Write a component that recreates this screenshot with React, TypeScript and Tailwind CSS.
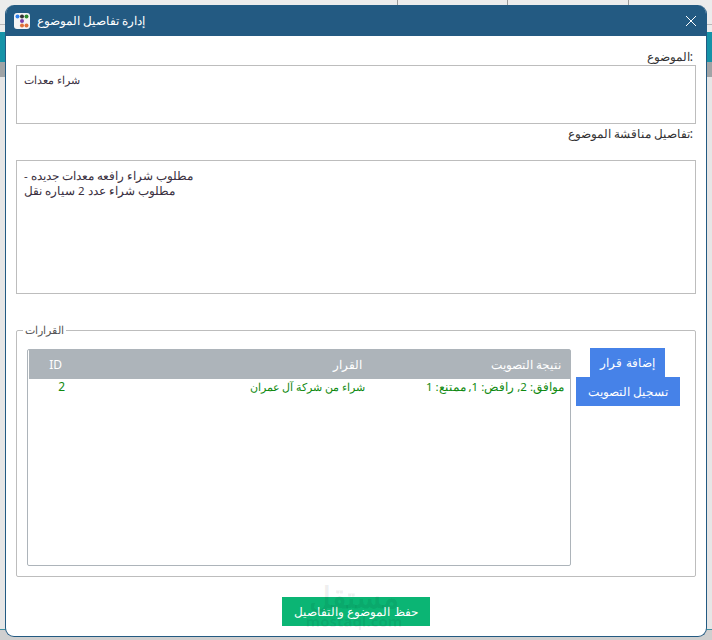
const font = "font-['Noto_Sans','Liberation_Sans',sans-serif]";

function AppIcon() {
  return (
    <svg width="16" height="16" viewBox="0 0 16 16" className="shrink-0">
      <rect width="16" height="16" rx="3" fill="#f4f4f4" />
      <circle cx="3.5" cy="3.5" r="2" fill="#2f80ed" />
      <circle cx="8" cy="3.5" r="2" fill="#333333" />
      <circle cx="12.5" cy="3.5" r="2" fill="#2e8b2e" />
      <circle cx="8" cy="8" r="2" fill="#7b3fa8" />
      <circle cx="8" cy="12.5" r="2" fill="#e0703a" />
      <circle cx="12.5" cy="12.5" r="2" fill="#e0703a" />
    </svg>
  );
}

export default function App() {
  return (
    <div className={`${font} relative w-[712px] h-[640px] overflow-hidden bg-[#ececec] pt-[5px] pl-[5px]`}>
      <div className="absolute left-[397px] top-0 w-px h-[5px] bg-[#9a9a9a]" />
      <div className="absolute left-[507px] top-0 w-px h-[5px] bg-[#9a9a9a]" />
      <div className="absolute left-[628px] top-0 w-px h-[5px] bg-[#9a9a9a]" />
      <div className="absolute left-0 right-0 top-[24px] h-px bg-[#b8b8b8]" />
      <div className="absolute left-0 right-0 top-[32px] h-[30px] bg-[#1593a8]" />
      <div className="absolute left-0 right-0 top-[62px] h-[15px] bg-[#a0a4a6]" />
      <div className="absolute left-0 right-0 top-[77px] h-[552px] bg-[#e6e6e6]" />
      <div className="absolute left-0 right-0 top-[629px] h-px bg-[#3f8fa0]" />
      <div className="absolute left-0 right-0 top-[630px] bottom-0 bg-[#cfcfcf]" />
      <div className="relative w-[702px] h-[632px] flex flex-col bg-white rounded-[9px] overflow-hidden border-x border-b border-[#235a82]">
        <div className="h-[31px] shrink-0 bg-[#235a82] flex items-center pl-[8px] pr-[9px] text-white" dir="ltr">
          <AppIcon />
          <span dir="rtl" className="ml-[7px] text-[12px] leading-none">إدارة تفاصيل الموضوع</span>
          <svg width="12" height="12" viewBox="0 0 12 12" className="ml-auto" stroke="white" strokeWidth="1" fill="none">
            <path d="M1 1L11 11M11 1L1 11" />
          </svg>
        </div>
        <div className="flex-1 flex flex-col px-[10px] text-[#333333] text-[12px]">
          <div dir="ltr" className="h-[29px] text-right pr-[3px] pt-[13px] leading-[16px]">الموضوع:</div>
          <div dir="rtl" className="h-[59px] border border-[#bdbdbd] pl-[7px] pt-[5px] leading-[18px] text-[11px] text-left text-[#3a3040]">شراء معدات</div>
          <div dir="ltr" className="h-[36px] text-right pr-[3px] pt-[2px] leading-[16px]">تفاصيل مناقشة الموضوع:</div>
          <div dir="rtl" className="h-[134px] border border-[#bdbdbd] pl-[7px] pt-[7px] leading-[15px] text-[11.5px] text-left text-[#3a3040]">
            <div>مطلوب شراء رافعه معدات جديده -</div>
            <div>مطلوب شراء عدد 2 سياره نقل</div>
          </div>
          <div className="relative h-[247px] mt-[36px] border border-[#bdbdbd] rounded-[2px] pl-[10px] pt-[18px]">
            <span className="absolute left-[6px] -top-[9px] bg-white px-[2px] leading-[16px] text-[11px] text-[#555555]">القرارات</span>
            <div className="flex">
              <div className="w-[544px] h-[217px] border border-[#adb4ba] rounded-[2px] pl-px">
                <div className="h-[29px] bg-[#adb4ba] flex items-center text-white">
                  <span className="w-[33px] text-right">ID</span>
                  <span className="w-[300px] text-right">القرار</span>
                  <span className="w-[199px] text-right">نتيجة التصويت</span>
                </div>
                <div className="flex text-[#108a10] leading-[16px]">
                  <span className="w-[36px] text-right">2</span>
                  <span className="w-[300px] text-right text-[11px]">شراء من شركة آل عمران</span>
                  <span dir="rtl" className="w-[199px] text-right text-[11.5px]">موافق: 2, رافض: 1, ممتنع: 1</span>
                </div>
              </div>
              <div className="flex flex-col items-start w-[104px] ml-[5px] -mt-px text-white">
                <button className="ml-[14px] w-[75px] h-[29px] bg-[#4682e8]">إضافة قرار</button>
                <button className="w-[104px] h-[29px] bg-[#4682e8]">تسجيل التصويت</button>
              </div>
            </div>
          </div>
          <div className="flex justify-center mt-[20px]">
            <button className="w-[148px] h-[29px] bg-[#0bb574] text-white">حفظ الموضوع والتفاصيل</button>
          </div>
        </div>
        <div className="absolute left-[303px] top-[575px] w-[90px] flex flex-col items-center pointer-events-none text-[#000000]/[0.07] font-bold">
          <span className="text-[30px] leading-[34px]">مستقل</span>
          <span className="text-[15px] leading-[14px]">mostaql.com</span>
        </div>
      </div>
    </div>
  );
}
